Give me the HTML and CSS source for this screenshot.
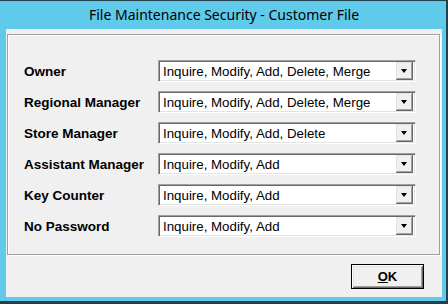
FILE: index.html
```html
<!DOCTYPE html>
<html lang="en">
<head>
    <meta charset="UTF-8">
    <title>File Maintenance Security - Customer File</title>
    <link rel="stylesheet" href="styles.css">
</head>
<body>
    <div class="window">
        <div class="titlebar">File Maintenance Security - Customer File</div>
        <div class="client">
            <div class="group">
                <div class="row">
                    <span class="label">Owner</span>
                    <div class="combo"><span class="value">Inquire, Modify, Add, Delete, Merge</span><span class="drop"></span></div>
                </div>
                <div class="row">
                    <span class="label">Regional Manager</span>
                    <div class="combo"><span class="value">Inquire, Modify, Add, Delete, Merge</span><span class="drop"></span></div>
                </div>
                <div class="row">
                    <span class="label">Store Manager</span>
                    <div class="combo"><span class="value">Inquire, Modify, Add, Delete</span><span class="drop"></span></div>
                </div>
                <div class="row">
                    <span class="label">Assistant Manager</span>
                    <div class="combo"><span class="value">Inquire, Modify, Add</span><span class="drop"></span></div>
                </div>
                <div class="row">
                    <span class="label">Key Counter</span>
                    <div class="combo"><span class="value">Inquire, Modify, Add</span><span class="drop"></span></div>
                </div>
                <div class="row">
                    <span class="label">No Password</span>
                    <div class="combo"><span class="value">Inquire, Modify, Add</span><span class="drop"></span></div>
                </div>
            </div>
            <div class="buttons">
                <button class="btn"><u>O</u>K</button>
            </div>
        </div>
    </div>
</body>
</html>
```

FILE: styles.css
```css
body {
    margin: 0;
    background: #24404c;
    font-family: 'Liberation Sans', Arial, sans-serif;
}

.window {
    width: 446px;
    height: 300px;
    margin-top: 1px;
    background: #5fcaea;
    display: flex;
    flex-direction: column;
    padding: 0 4px 0 6px;
    box-sizing: border-box;
}

.titlebar {
    height: 28px;
    line-height: 28px;
    text-align: center;
    font-family: 'Noto Sans', 'Open Sans', sans-serif;
    font-size: 14px;
    color: #000;
}

.client {
    height: 268px;
    background: #f0f0f0;
    padding: 5px 2px 0 1px;
    box-sizing: border-box;
}

.group {
    height: 221px;
    border: 1px solid #a0a0a0;
    box-shadow: inset 1px 1px 0 #fff, 1px 1px 0 #fff;
    box-sizing: border-box;
    padding: 25px 0 0 16px;
    display: flex;
    flex-direction: column;
    gap: 9px;
}

.row {
    display: flex;
    align-items: center;
    height: 22px;
}

.label {
    width: 134px;
    font-weight: bold;
    font-size: 13.5px;
    color: #000;
}

.combo {
    width: 258px;
    height: 22px;
    box-sizing: border-box;
    background: #fff;
    border-top: 1px solid #a0a0a0;
    border-left: 1px solid #a0a0a0;
    border-right: 1px solid #fff;
    border-bottom: 1px solid #fff;
    box-shadow: inset 1px 1px 0 #696969, inset -1px -1px 0 #e3e3e3;
    display: flex;
    align-items: center;
    padding: 2px 2px 2px 4px;
}

.value {
    flex: 1;
    font-size: 13.3px;
    color: #000;
}

.drop {
    width: 17px;
    height: 18px;
    box-sizing: border-box;
    background: #f0f0f0;
    border-right: 1px solid #696969;
    border-bottom: 1px solid #696969;
    box-shadow: inset 1px 1px 0 #e3e3e3, inset -1px -1px 0 #a0a0a0;
    position: relative;
}

.drop::after {
    content: "";
    position: absolute;
    left: 5px;
    top: 7px;
    border-left: 3.5px solid transparent;
    border-right: 3.5px solid transparent;
    border-top: 4px solid #000;
}

.buttons {
    display: flex;
    justify-content: flex-end;
    padding: 9px 16px 0 0;
}

.btn {
    width: 73px;
    height: 25px;
    background: #f0f0f0;
    border: 1px solid #000;
    box-shadow: inset 1px 1px 0 #fff, inset -1px -1px 0 #696969, inset 2px 2px 0 #e3e3e3, inset -2px -2px 0 #a0a0a0;
    font-family: 'Liberation Sans', Arial, sans-serif;
    font-weight: bold;
    font-size: 13px;
    color: #000;
    padding: 0;
}
```
